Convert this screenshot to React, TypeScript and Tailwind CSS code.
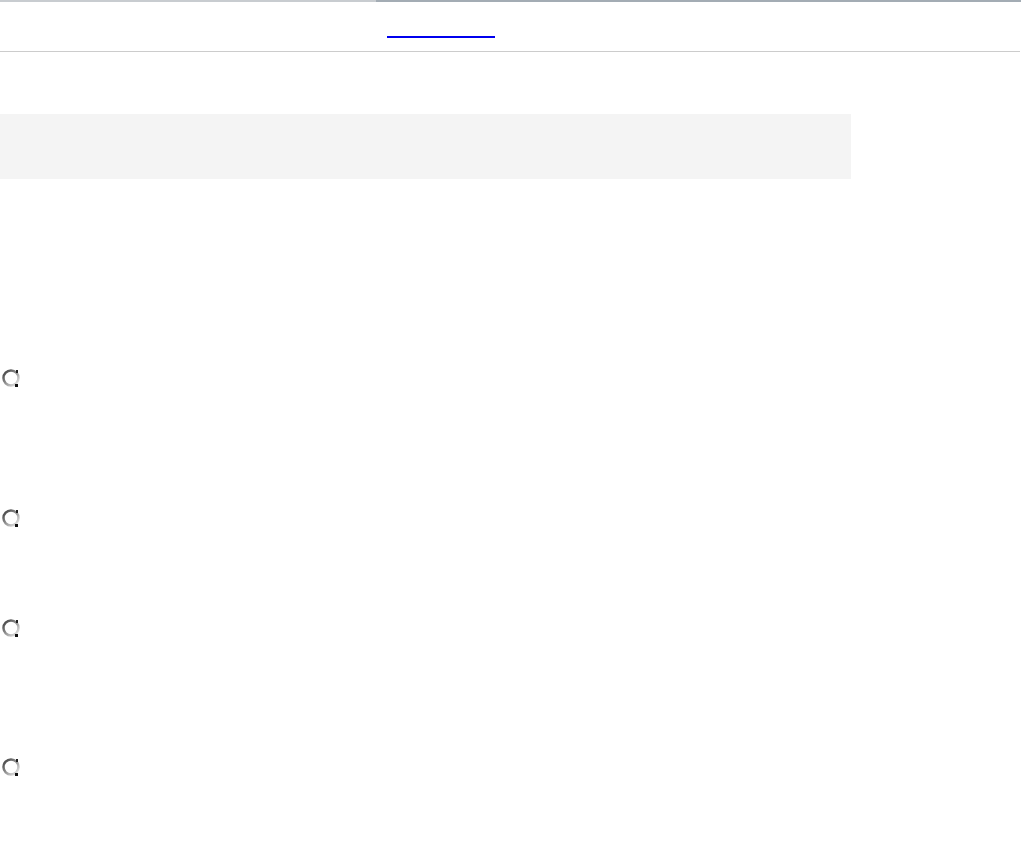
import React from "react";

function Radio() {
  return (
    <svg width="22" height="22" viewBox="0 0 22 22" className="block">
      <defs>
        <linearGradient id="rg" x1="0" y1="0" x2="1" y2="1">
          <stop offset="0" stopColor="#3a3a3a" />
          <stop offset="0.45" stopColor="#8a8a8a" />
          <stop offset="1" stopColor="#f2f2f2" />
        </linearGradient>
      </defs>
      <circle cx="11" cy="11" r="7.5" fill="#ffffff" stroke="url(#rg)" strokeWidth="2.5" />
      <rect x="16" y="3" width="2" height="3" fill="#222" />
      <rect x="15" y="17" width="3" height="3" fill="#111" />
    </svg>
  );
}

export default function App() {
  const rows = [
    { mt: "mt-[188px]" },
    { mt: "mt-[118px]" },
    { mt: "mt-[88px]" },
    { mt: "mt-[117px]" },
  ];
  return (
    <div className="w-[1021px] h-[848px] bg-white font-['Liberation_Sans',sans-serif] overflow-hidden">
      <div className="flex h-[2px]">
        <div className="w-[376px] bg-[#c8ccd0]" />
        <div className="flex-1 bg-[#a3acb4]" />
      </div>
      <div className="w-[1020px] h-[50px] border-b border-[#cccccc] pl-[387px] pt-[34px]">
        <div className="w-[108px] h-[2px] bg-[#0000ee]" />
      </div>
      <div className="mt-[62px] w-[851px] h-[65px] bg-[#f4f4f4]" />
      {rows.map((r, i) => (
        <div key={i} className={r.mt}>
          <Radio />
        </div>
      ))}
    </div>
  );
}
